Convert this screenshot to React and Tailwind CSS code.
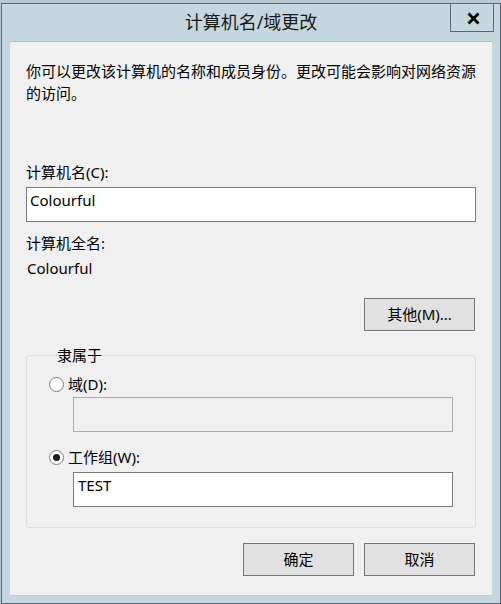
import React from 'react';

const FONT = "font-['Noto_Sans','Noto_Sans_CJK_SC',sans-serif]";

function Radio({ checked, label }) {
  return (
    <div className="flex items-center h-[22px]">
      <span className="w-[15px] h-[15px] rounded-full border border-[#7d7d7d] bg-white flex items-center justify-center">
        {checked && <span className="w-[7px] h-[7px] rounded-full bg-[#1c1c1c]" />}
      </span>
      <span className="ml-[4px] text-[15px] leading-[22px] text-black">{label}</span>
    </div>
  );
}

function Button({ children }) {
  return (
    <button className="w-[111px] h-[33px] bg-[#e1e1e1] border border-[#767676] text-[15px] text-black flex items-center justify-center">
      {children}
    </button>
  );
}

export default function App() {
  return (
    <div className={`w-[501px] h-[604px] bg-[#b7c8cf] pt-[3px] ${FONT}`}>
      <div className="relative ml-[1px] w-[500px] h-[601px] border border-[#5b6872] bg-[#c4d7de] flex flex-col">
        {/* title bar */}
        <div className="h-[37px] flex items-center justify-center text-[18px] text-[#1a1a1a]">
          计算机名/域更改
        </div>
        <div className="absolute top-[-1px] right-[6px] w-[44px] h-[29px] border border-[#5b6872] flex items-center justify-center">
          <svg width="13" height="13" viewBox="0 0 13 13" className="mt-[2px] ml-[2px]">
            <path d="M1.5 1.5 L11.5 11.5 M11.5 1.5 L1.5 11.5" stroke="#000" strokeWidth="2.8" />
          </svg>
        </div>

        {/* content */}
        <div className="mx-[8px] h-[555px] bg-[#f0f0f0] border-t border-b border-t-[#aebcc3] border-b-[#c3c9cc] pl-[16px] pt-[18px] text-black">
          <p className="w-[456px] text-[15px] leading-[22px]">
            你可以更改该计算机的名称和成员身份。更改可能会影响对网络资源的访问。
          </p>

          <div className="mt-[57px] text-[15px] leading-[22px]">计算机名(C):</div>
          <div className="mt-[4px] w-[450px] h-[35px] border border-[#7a7a7a] bg-white pl-[3px] pt-[2px] text-[15px] leading-[20px]">
            Colourful
          </div>

          <div className="mt-[10px] text-[15px] leading-[22px]">计算机全名:</div>
          <div className="mt-[3px] pl-[1px] text-[15px] leading-[22px]">Colourful</div>

          <div className="mt-[19px] w-[449px] flex justify-end">
            <Button>其他(M)...</Button>
          </div>

          <fieldset className="mt-[13px] w-[450px] border border-[#d8dee2] rounded-[3px] pl-[22px] pt-[7px] pb-[20px]">
            <legend className="ml-[8px] px-[0px] text-[15px] leading-[22px]">隶属于</legend>
            <Radio label="域(D):" />
            <div className="mt-[2px] ml-[24px] w-[380px] h-[35px] border border-[#adadad] bg-[#f0f0f0]" />
            <div className="mt-[14px]">
              <Radio checked label="工作组(W):" />
            </div>
            <div className="mt-[4px] ml-[24px] w-[380px] h-[35px] border border-[#7a7a7a] bg-white pl-[4px] pt-[2px] text-[15px] leading-[20px]">
              TEST
            </div>
          </fieldset>

          <div className="mt-[15px] w-[449px] flex justify-end gap-[10px]">
            <Button>确定</Button>
            <Button>取消</Button>
          </div>
        </div>
      </div>
    </div>
  );
}
